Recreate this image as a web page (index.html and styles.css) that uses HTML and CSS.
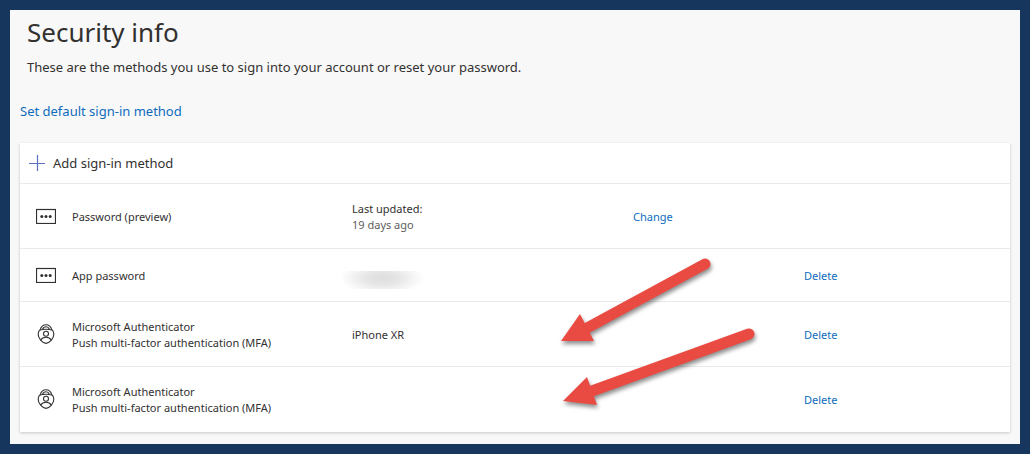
FILE: index.html
```html
<!DOCTYPE html>
<html lang="en">
<head>
    <meta charset="UTF-8">
    <meta name="viewport" content="width=device-width, initial-scale=1.0">
    <title>Security info</title>
    <link rel="stylesheet" href="styles.css">
</head>
<body>
    <svg class="icon-defs" aria-hidden="true">
        <symbol id="icon-password" viewBox="0 0 20 16">
            <rect x="0.5" y="1.5" width="19" height="14" fill="none" stroke="currentColor" stroke-width="1.2"/>
            <circle cx="5.8" cy="8.5" r="1.5" fill="currentColor"/>
            <circle cx="10" cy="8.5" r="1.5" fill="currentColor"/>
            <circle cx="14.2" cy="8.5" r="1.5" fill="currentColor"/>
        </symbol>
        <symbol id="icon-authenticator" viewBox="0 0 20 20">
            <g fill="none" stroke="currentColor" stroke-width="1.1">
                <path d="M4.2 5.8C5 2.6 7.2 0.7 10 0.7s5 1.9 5.8 5.1"/>
                <path d="M6.6 5.2C7.2 3.6 8.4 2.7 10 2.7s2.8 0.9 3.4 2.5"/>
                <path d="M3.4 6.2Q10 4.2 16.6 6.2C18.6 9.6 17.9 13.2 15.4 16.2Q12.8 19.2 10 19.4 7.2 19.2 4.6 16.2C2.1 13.2 1.4 9.6 3.4 6.2z"/>
                <circle cx="10" cy="9.8" r="2.5"/>
                <path d="M4.6 16.2C5.8 14.2 7.6 13.3 10 13.3s4.2 0.9 5.4 2.9"/>
            </g>
        </symbol>
    </svg>

    <main class="page">
        <header class="page-header">
            <h1>Security info</h1>
            <p>These are the methods you use to sign into your account or reset your password.</p>
        </header>

        <a class="default-link" href="#">Set default sign-in method</a>

        <section class="card">
            <button type="button" class="add-btn">
                <svg class="plus" viewBox="0 0 16 16" aria-hidden="true">
                    <path d="M8.5 0v16M0 8.5h16" stroke="currentColor" stroke-width="1.2"/>
                </svg>
                Add sign-in method
            </button>

            <table class="methods">
                <colgroup>
                    <col class="col-icon">
                    <col class="col-name">
                    <col class="col-detail">
                    <col class="col-change">
                    <col>
                </colgroup>
                <tbody>
                    <tr>
                        <td><svg class="icon icon-password"><use href="#icon-password"/></svg></td>
                        <td>Password (preview)</td>
                        <td>Last updated:<br><span class="muted">19 days ago</span></td>
                        <td><a href="#">Change</a></td>
                        <td></td>
                    </tr>
                    <tr class="short">
                        <td><svg class="icon icon-password"><use href="#icon-password"/></svg></td>
                        <td>App password</td>
                        <td><div class="redacted"></div></td>
                        <td></td>
                        <td><a href="#">Delete</a></td>
                    </tr>
                    <tr>
                        <td><svg class="icon"><use href="#icon-authenticator"/></svg></td>
                        <td>Microsoft Authenticator<br>Push multi-factor authentication (MFA)</td>
                        <td>iPhone XR</td>
                        <td></td>
                        <td><a href="#">Delete</a></td>
                    </tr>
                    <tr>
                        <td><svg class="icon"><use href="#icon-authenticator"/></svg></td>
                        <td>Microsoft Authenticator<br>Push multi-factor authentication (MFA)</td>
                        <td></td>
                        <td></td>
                        <td><a href="#">Delete</a></td>
                    </tr>
                </tbody>
            </table>
        </section>

        <!-- arrows pointing at the two authenticator rows -->
        <svg class="arrows" width="220" height="170" viewBox="550 250 220 170" aria-hidden="true">
            <g fill="#e94b43" stroke="#e94b43">
                <path d="M705 264L587 328" stroke-width="11" stroke-linecap="round"/>
                <path d="M561 341L580 314L594 341z" stroke="none"/>
                <path d="M749 334L592 391" stroke-width="11" stroke-linecap="round"/>
                <path d="M563 401L587 377L597 405z" stroke="none"/>
            </g>
        </svg>
    </main>
</body>
</html>
```

FILE: styles.css
```css
* {
    margin: 0;
    padding: 0;
    box-sizing: border-box;
}

body {
    min-height: 100vh;
    border: 10px solid #17365d;
    background: #f8f8f8;
    color: #323130;
    font-family: 'Noto Sans', 'Open Sans', sans-serif;
    font-size: 13px;
}

a {
    color: #0f6cbd;
    text-decoration: none;
}

a:hover {
    text-decoration: underline;
}

.icon-defs {
    display: none;
}

.page {
    position: relative;
    padding: 4px 10px 12px;
}

.page-header {
    padding: 0 7px;
}

h1 {
    font-size: 26px;
    font-weight: 400;
    line-height: 36px;
}

.page-header p {
    margin-top: 7px;
    line-height: 20px;
}

.default-link {
    display: inline-block;
    margin-top: 24px;
    line-height: 20px;
}

.card {
    margin-top: 22px;
    background: #fff;
    box-shadow: 0 1px 3px rgba(0, 0, 0, 0.2);
}

.add-btn {
    display: flex;
    align-items: center;
    gap: 8px;
    width: 100%;
    height: 40px;
    padding: 0 9px;
    border: none;
    background: none;
    color: inherit;
    font: inherit;
    cursor: pointer;
}

.plus {
    width: 16px;
    height: 16px;
    color: #5c6fc0;
}

.methods {
    width: 100%;
    table-layout: fixed;
    border-collapse: collapse;
    font-size: 11px;
    line-height: 16px;
}

.methods tr {
    height: 65px;
    border-top: 1px solid #eaeaea;
}

.methods tr.short {
    height: 53px;
}

.methods td {
    padding-top: 2px;
    vertical-align: middle;
}

.methods td:first-child {
    padding: 0 0 0 16px;
}

.col-icon {
    width: 52px;
}

.col-name {
    width: 280px;
}

.col-detail {
    width: 281px;
}

.col-change {
    width: 171px;
}

.muted {
    color: #605e5c;
}

.icon {
    display: block;
    width: 20px;
    height: 20px;
}

.icon-password {
    height: 16px;
}

/* hidden device name */
.redacted {
    width: 84px;
    height: 18px;
    margin: 8px 0 0 -12px;
    background: radial-gradient(ellipse 42px 17px at 42px 7px, #dededf 0%, #e6e6e7 40%, #fff 100%);
}

.arrows {
    position: absolute;
    top: 240px;
    left: 540px;
    filter: drop-shadow(1px 3px 2px rgba(0, 0, 0, 0.45));
    pointer-events: none;
}
```
